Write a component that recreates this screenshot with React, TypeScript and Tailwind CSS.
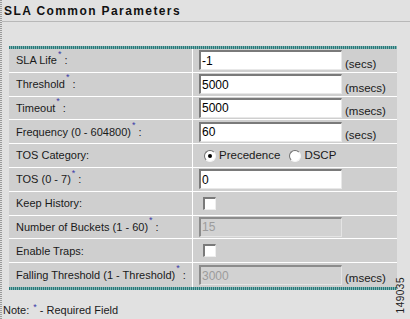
import React from "react";

const Req = () => (
  <>
    <span className="relative -top-[6px] ml-[1px] text-[9px] text-[#3a3aa8]">*</span>
    <span className="ml-[3px]">:</span>
  </>
);

const Input = ({ value, disabled }: { value: string; disabled?: boolean }) => (
  <div
    className={
      "w-[143px] h-[20px] flex items-center pl-[1px] text-[12px] border-t-2 border-l-2 border-b border-r " +
      (disabled
        ? "bg-[#d2d2d2] text-[#9c9c9c] border-t-[#8c8c8c] border-l-[#8c8c8c] border-b-[#e4e4e4] border-r-[#e4e4e4]"
        : "bg-white text-black border-t-[#7a7a7a] border-l-[#7a7a7a] border-b-[#e8e8e8] border-r-[#e8e8e8]")
    }
  >
    {value}
  </div>
);

const Unit = ({ t }: { t: string }) => <span className="ml-[3px] pt-[8px] text-[11.5px] text-[#1a1a1a]">{t}</span>;

const Check = () => (
  <div className="w-[13px] h-[13px] bg-white border-t-2 border-l-2 border-b border-r border-t-[#7a7a7a] border-l-[#7a7a7a] border-b-[#eeeeee] border-r-[#eeeeee]" />
);

const Radio = ({ checked }: { checked?: boolean }) => (
  <div className="w-[12px] h-[12px] rounded-full bg-white border border-t-[#6f6f6f] border-l-[#6f6f6f] border-b-[#f4f4f4] border-r-[#f4f4f4] flex items-center justify-center">
    {checked && <div className="w-[4px] h-[4px] rounded-full bg-black" />}
  </div>
);

const Row = ({ label, req, children, last }: { label: string; req?: boolean; children: React.ReactNode; last?: boolean }) => (
  <div className={"flex h-[23.8px] " + (last ? "" : "border-b border-white")}>
    <div className="w-[183px] bg-[#cfcfcf] flex items-center pl-[7px] text-[11px] text-[#1a1a1a]">
      {label}
      {req ? <Req /> : null}
    </div>
    <div className="w-px bg-white" />
    <div className="flex-1 bg-[#cfcfcf] flex items-center pl-[6px]">{children}</div>
  </div>
);

const Teal = () => (
  <div className="h-[3px] w-[388px] bg-[repeating-linear-gradient(90deg,#287878_0px,#287878_1px,#7fb2b2_1px,#7fb2b2_2px)]" />
);

export default function App() {
  return (
    <div
      className="w-[410px] h-[319px] bg-[#e1e1e1] relative overflow-hidden flex"
      style={{ fontFamily: '"Liberation Sans", Arial, sans-serif' }}
    >
      <div className="w-[2px] h-full bg-[repeating-linear-gradient(180deg,#9a9a9a_0px,#9a9a9a_1px,#e1e1e1_1px,#e1e1e1_2px)]" />
      <div className="flex-1 flex flex-col">
        <div className="h-[22px] border-b border-[#b8b8b8] flex items-center pl-[2px] pt-[1px]">
          <span className="font-bold text-[12px] tracking-[1.4px] text-[#111]">SLA Common Parameters</span>
        </div>
        <div className="h-[24px]" />
        <div className="ml-[7px] flex flex-col">
          <Teal />
          <div className="w-[388px] flex flex-col">
            <Row label="SLA Life" req>
              <Input value="-1" />
              <Unit t="(secs)" />
            </Row>
            <Row label="Threshold" req>
              <Input value="5000" />
              <Unit t="(msecs)" />
            </Row>
            <Row label="Timeout" req>
              <Input value="5000" />
              <Unit t="(msecs)" />
            </Row>
            <Row label="Frequency (0 - 604800)" req>
              <Input value="60" />
              <Unit t="(secs)" />
            </Row>
            <Row label="TOS Category:">
              <div className="flex items-center text-[11.5px] text-[#1a1a1a] pl-[5px]">
                <Radio checked />
                <span className="ml-[3px]">Precedence</span>
                <div className="ml-[9px]">
                  <Radio />
                </div>
                <span className="ml-[3px]">DSCP</span>
              </div>
            </Row>
            <Row label="TOS (0 - 7)" req>
              <Input value="0" />
            </Row>
            <Row label="Keep History:">
              <div className="pl-[4px]">
                <Check />
              </div>
            </Row>
            <Row label="Number of Buckets (1 - 60)" req>
              <Input value="15" disabled />
            </Row>
            <Row label="Enable Traps:">
              <div className="pl-[4px]">
                <Check />
              </div>
            </Row>
            <Row label="Falling Threshold (1 - Threshold)" req last>
              <Input value="3000" disabled />
              <Unit t="(msecs)" />
            </Row>
          </div>
          <Teal />
        </div>
        <div className="mt-[12px] pl-[1px] text-[11px] text-[#1a1a1a] flex items-start">
          <span>Note:</span>
          <span className="ml-[4px] text-[9px] text-[#3a3aa8] relative -top-[1px]">*</span>
          <span className="ml-[3px]">- Required Field</span>
        </div>
      </div>
      <div className="absolute right-[2px] top-[277px] text-[10px] text-[#222] [writing-mode:vertical-rl] rotate-180 tracking-[0.5px]">
        149035
      </div>
    </div>
  );
}
